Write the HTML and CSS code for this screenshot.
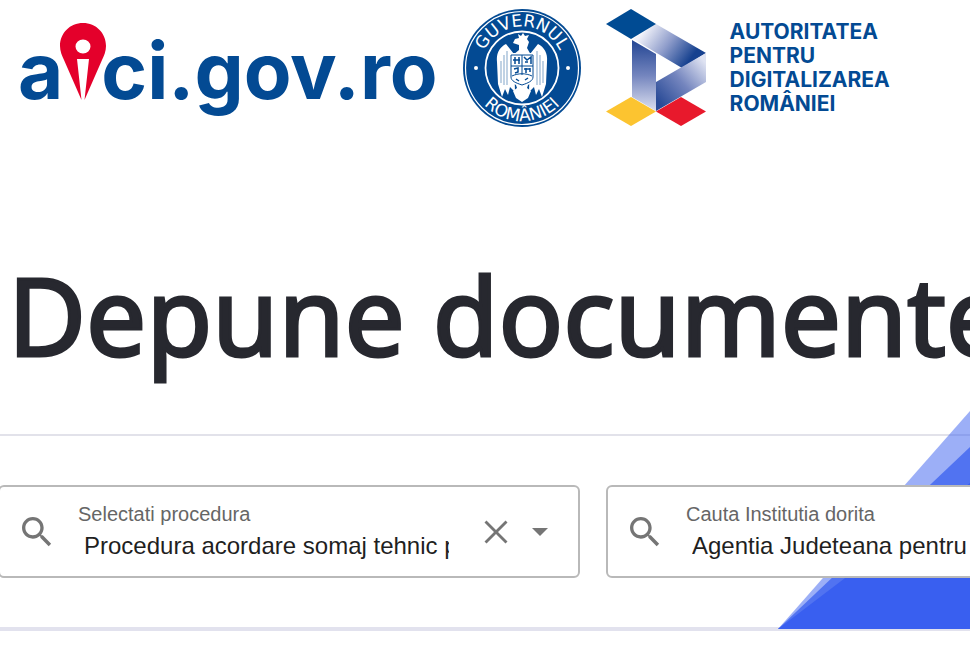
FILE: index.html
```
<!DOCTYPE html>
<html lang="ro">
<head>
    <meta charset="UTF-8">
    <meta name="viewport" content="width=device-width, initial-scale=1">
    <title>aici.gov.ro</title>
    <link rel="stylesheet" href="styles.css">
</head>
<body>
    <header class="header">
        <div class="brand">
            <span>a</span>
            <svg class="brand-pin" viewBox="0 0 46 78" aria-hidden="true">
                <path fill="#e4002b" fill-rule="evenodd" d="M23 0C10 0 0 10 0 23c0 5 2 10 4 14l17.500 40L17 36h12l-4.500 41L42 37c2-4 4-9 4-14C46 10 36 0 23 0zM23 16.500a7.500 7 0 1 0 0 14a7.500 7 0 1 0 0-14z"/>
            </svg>
            <span>ci.gov.ro</span>
        </div>

        <!-- Government seal -->
        <svg class="seal" viewBox="0 0 118 118" role="img" aria-label="Guvernul României">
            <defs>
                <path id="arc-top" d="M17.500 59a41.500 41.500 0 0 1 83 0"/>
                <path id="arc-bottom" d="M6 59a53 53 0 0 0 106 0"/>
            </defs>
            <circle cx="59" cy="59" r="59" fill="#034a93"/>
            <circle cx="59" cy="59" r="56.500" fill="none" stroke="#fff" stroke-width="1.200"/>
            <circle cx="59" cy="59" r="36.500" fill="none" stroke="#fff" stroke-width="1.800"/>
            <circle cx="13" cy="59" r="2" fill="#fff"/>
            <circle cx="105" cy="59" r="2" fill="#fff"/>
            <text class="seal-text"><textPath href="#arc-top" startOffset="50%">GUVERNUL</textPath></text>
            <text class="seal-text"><textPath href="#arc-bottom" startOffset="50%">ROMÂNIEI</textPath></text>
            <g fill="#fff">
                <path d="M56 36l-6-2 2-4 4-1-1-4 3 2 2-3 2 3 4-1-2 4 2 3-2 6 4 7H50l6-5z"/>
                <path d="M51 45l-4-5-4-5c-6 3-10 9-9 18l1 22 4 13 3-8 3 6 2-8 5 5z"/>
                <path d="M67 45l4-5 4-5c6 3 10 9 9 18l-1 22-4 13-3-8-3 6-2-8-5 5z"/>
                <path d="M47 44h24v25c0 4-4 6-6 7l-1 3 4 3-3 7-6 4-6-4-3-7 4-3-1-3c-2-1-6-3-6-7z"/>
            </g>
            <g fill="none" stroke="#034a93">
                <path d="M48 46h22v22c0 4-5 6-11 8-6-2-11-4-11-8zM59 46v20M48 57h22M49 67c6-3 14-3 20 0"/>
                <path stroke-width="1.500" d="M50 51h7M52 48v7M56 48v7M61 48l3 3 4-3v7M62 53h3M51 60l4-1v4l-3 1M61 60h6M63 59v5M67 59v4M53 70l3 2M62 71l3-2"/>
                <path stroke-width=".500" d="M38 52v22M41 46v30M44 42v34M80 52v22M77 46v30M74 42v34"/>
            </g>
        </svg>

        <div class="agency">
            <svg class="agency-logo" viewBox="0 0 100 118" aria-hidden="true">
                <defs>
                    <linearGradient id="beam" gradientUnits="userSpaceOnUse" x1="36" y1="24" x2="80" y2="56">
                        <stop offset="0" stop-color="#f2f3fa"/>
                        <stop offset=".5" stop-color="#8f9dcb"/>
                        <stop offset="1" stop-color="#16418f"/>
                    </linearGradient>
                    <linearGradient id="post" x1="0" y1="0" x2="0" y2="1">
                        <stop offset=".05" stop-color="#2a4b97"/>
                        <stop offset=".5" stop-color="#7485be"/>
                        <stop offset="1" stop-color="#dce0f0"/>
                    </linearGradient>
                    <linearGradient id="brace" gradientUnits="userSpaceOnUse" x1="98" y1="52" x2="52" y2="92">
                        <stop offset="0" stop-color="#dfe3f2"/>
                        <stop offset=".5" stop-color="#7485be"/>
                        <stop offset="1" stop-color="#2a4b97"/>
                    </linearGradient>
                </defs>
                <path fill="url(#beam)" d="M50 15l50 29-24 15-49-29z"/>
                <path fill="url(#post)" d="M26 31l24 14v57l-24-14z"/>
                <path fill="url(#brace)" d="M100 44v29l-50 29V73z"/>
                <path fill="#004b93" d="M25 0l25 15-25 15L0 15z"/>
                <path fill="#fcc430" d="M25 88l25 14.500L25 117 0 102.500z"/>
                <path fill="#e8192c" d="M75 88l25 14.500L75 117l-25-14.500z"/>
            </svg>
            <div class="agency-name">AUTORITATEA<br>PENTRU<br>DIGITALIZAREA<br>ROMÂNIEI</div>
        </div>
    </header>

    <main>
        <h1 class="title">Depune documente</h1>

        <form class="search-panel">
            <svg class="panel-art" viewBox="0 0 192 218" aria-hidden="true">
                <path fill="#3a5ff0" fill-opacity=".5" d="M0 218L192 0v218z"/>
                <path fill="#4468f0" fill-opacity=".850" d="M0 218L192 36v182z"/>
                <path fill="#395ff0" d="M0 218L192 72v146z"/>
            </svg>

            <div class="field">
                <svg class="icon" viewBox="0 0 24 24" aria-hidden="true">
                    <path d="M15.500 14h-.79l-.28-.27C15.410 12.590 16 11.110 16 9.500 16 5.910 13.090 3 9.500 3S3 5.910 3 9.500 5.910 16 9.500 16c1.610 0 3.090-.59 4.230-1.570l.27.28v.79l5 4.990L20.490 19l-4.990-5zm-6 0C7.010 14 5 11.990 5 9.500S7.010 5 9.500 5 14 7.010 14 9.500 11.990 14 9.500 14z"/>
                </svg>
                <div class="field-text">
                    <label for="procedura">Selectati procedura</label>
                    <input type="text" id="procedura" value="Procedura acordare somaj tehnic pentru">
                </div>
                <div class="field-actions">
                    <button type="button" aria-label="Sterge">
                        <svg class="icon" viewBox="0 0 40 40"><path d="M10.500 8.500L20 18l9.500-9.500 2 2L22 20l9.500 9.500-2 2L20 22l-9.500 9.500-2-2L18 20l-9.500-9.500z"/></svg>
                    </button>
                    <button type="button" aria-label="Deschide">
                        <svg class="icon" viewBox="0 0 40 40"><path d="M12 16h16l-8 8z"/></svg>
                    </button>
                </div>
            </div>

            <div class="field">
                <svg class="icon" viewBox="0 0 24 24" aria-hidden="true">
                    <path d="M15.500 14h-.79l-.28-.27C15.410 12.590 16 11.110 16 9.500 16 5.910 13.090 3 9.500 3S3 5.910 3 9.500 5.910 16 9.500 16c1.610 0 3.090-.59 4.230-1.570l.27.28v.79l5 4.990L20.490 19l-4.990-5zm-6 0C7.010 14 5 11.990 5 9.500S7.010 5 9.500 5 14 7.010 14 9.500 11.990 14 9.500 14z"/>
                </svg>
                <div class="field-text">
                    <label for="institutia">Cauta Institutia dorita</label>
                    <input type="text" id="institutia" value="Agentia Judeteana pentru">
                </div>
            </div>
        </form>
    </main>
</body>
</html>
```
FILE: styles.css
```
* {
    box-sizing: border-box;
}
body {
    margin: 0;
    background: #fff;
    font-family: "Liberation Sans", Arial, sans-serif;
    overflow-x: hidden;
}
.header {
    display: flex;
    align-items: flex-start;
    gap: 25px;
    padding: 9px 18px 0;
}
.brand {
    display: flex;
    padding-top: 14px;
    font-family: Inter, sans-serif;
    font-size: 78px;
    font-weight: 700;
    line-height: 96px;
    color: #034a93;
}
.brand-pin {
    width: 46px;
    height: 78px;
    margin: 0 -5px 0 -3px;
}
.seal {
    flex: none;
    width: 118px;
    height: 118px;
}
.seal-text {
    font-family: "DejaVu Sans", sans-serif;
    font-size: 17px;
    fill: #fff;
    text-anchor: middle;
}
.agency {
    display: flex;
    gap: 24px;
}
.agency-logo {
    width: 100px;
    height: 118px;
}
.agency-name {
    padding-top: 11px;
    font-family: Inter, sans-serif;
    font-size: 21px;
    font-weight: 700;
    line-height: 24px;
    color: #034a93;
}

.title {
    margin: 112px 0 43px;
    padding-left: 8px;
    font-family: "Noto Sans", sans-serif;
    font-size: 107px;
    font-weight: 400;
    line-height: 152px;
    color: #27282f;
    -webkit-text-stroke: 3px #27282f;
    white-space: nowrap;
}

.search-panel {
    position: relative;
    display: flex;
    gap: 26px;
    padding: 49px 0;
    border-top: 2px solid #e2e2ea;
    border-bottom: 4px solid #e2e2ee;
}
/* the blue wedge runs behind the fields and past the panel's top edge */
.panel-art {
    position: absolute;
    right: 0;
    bottom: -2px;
    width: 192px;
    height: 218px;
}
.field {
    position: relative;
    display: flex;
    align-items: center;
    flex: 0 0 582px;
    height: 93px;
    padding: 0 18px 0 17px;
    background: #fff;
    border: 2px solid #b9b9b9;
    border-radius: 6px;
}
.field:first-of-type {
    margin-left: -2px;
}
.icon {
    flex: none;
    display: block;
    width: 40px;
    height: 40px;
    fill: #757575;
}
.field-text {
    flex: 1;
    min-width: 0;
    margin-left: 21px;
}
.field-text label {
    display: block;
    font-size: 20px;
    line-height: 28px;
    color: #666;
}
.field-text input {
    display: block;
    width: 100%;
    height: 36px;
    padding: 0 0 0 6px;
    border: none;
    outline: none;
    background: none;
    font-family: inherit;
    font-size: 24px;
    color: #1f1f1f;
}
.field-actions {
    display: flex;
    gap: 4px;
    margin-left: 27px;
}
.field-actions button {
    padding: 0;
    border: none;
    background: none;
    cursor: pointer;
}
```
